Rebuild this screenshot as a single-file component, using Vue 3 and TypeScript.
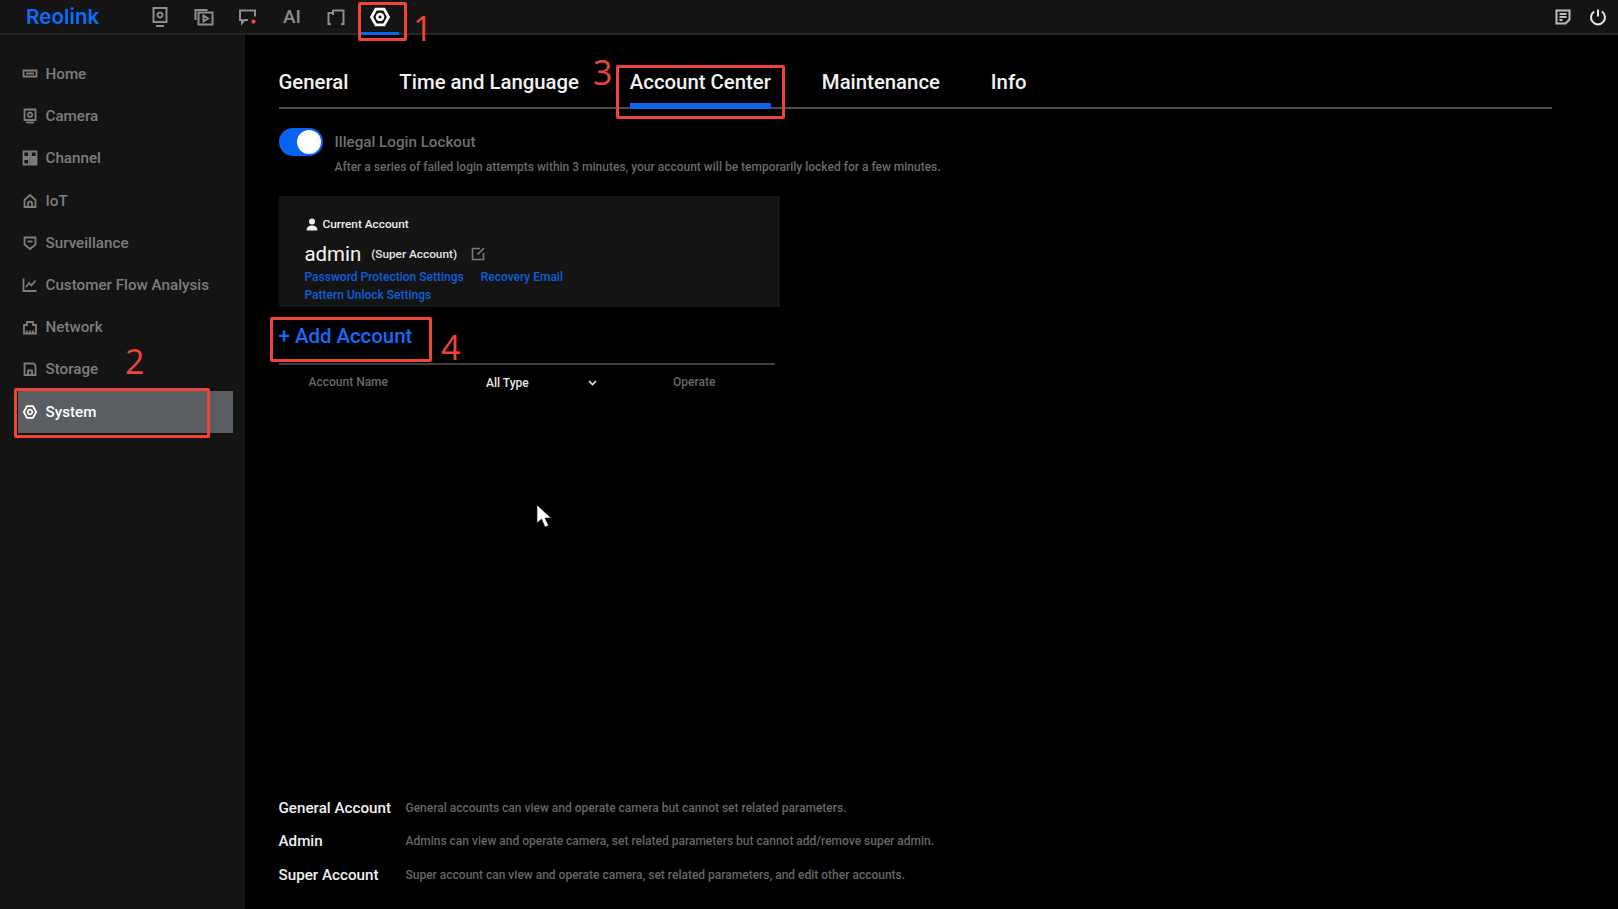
<script setup lang="ts">
interface NavItem {
  label: string
  paths: string[]
  active?: boolean
}

const hexPath = 'M5 2.2h6L14.2 8 11 13.8H5L1.8 8z'

const navItems: NavItem[] = [
  { label: 'Home', paths: ['M1.5 4.5h13v6h-13z', 'M4 7.5h8'] },
  { label: 'Camera', paths: ['M2.5 1.5h11v10.5h-11z', 'M8 4.5a2.2 2.2 0 1 0 .01 0z', 'M4 14.5h8'] },
  { label: 'Channel', paths: ['M1.5 1.5h5.5v5.5h-5.5z', 'M9 1.5h5.5v5.5h-5.5z', 'M1.5 9h5.5v5.5h-5.5z', 'M9 9h5.5v5.5h-5.5zM10.5 10.5h2.5v2.5h-2.5z'] },
  { label: 'IoT', paths: ['M2.5 7l5.5-5 5.5 5v7h-11z', 'M6 14v-3.5a2 2 0 0 1 4 0v3.5'] },
  { label: 'Surveillance', paths: ['M2.5 2.5h11v7l-5.5 4.5-5.5-4.5z', 'M5.5 6.5h5'] },
  { label: 'Customer Flow Analysis', paths: ['M1.5 1.5v12.5h13', 'M4 10l3-4 2.5 2.5 4-5'] },
  { label: 'Network', paths: ['M2 6h3v-3h6v3h3v8.5h-12z', 'M5 14.5v-3M8 14.5v-3M11 14.5v-3'] },
  { label: 'Storage', paths: ['M2.5 2.5h9l2 2v9.5h-11z', 'M6 14v-4.5h4v4.5'] },
  { label: 'System', paths: [hexPath, 'M8 5.7a2.3 2.3 0 1 0 .01 0z'], active: true }
]

const tabs = ['General', 'Time and Language', 'Account Center', 'Maintenance', 'Info']

const legend = [
  { name: 'General Account', text: 'General accounts can view and operate camera but cannot set related parameters.' },
  { name: 'Admin', text: 'Admins can view and operate camera, set related parameters but cannot add/remove super admin.' },
  { name: 'Super Account', text: 'Super account can view and operate camera, set related parameters, and edit other accounts.' }
]
</script>

<template>
  <div class="app">
    <header class="topbar">
      <div class="logo">Reolink</div>
      <nav class="top-icons">
        <div class="top-icon">
          <svg width="20" height="22" viewBox="0 0 20 22"><path d="M3.5 2h13v14h-13zM6 20h8M10 6.5a2.5 2.5 0 1 0 .01 0z" /></svg>
        </div>
        <div class="top-icon">
          <svg width="20" height="20" viewBox="0 0 20 20"><path d="M1.5 13V3h12M4.5 5.5h14v12h-14zM9.5 8.5l4.5 3-4.5 3z" /></svg>
        </div>
        <div class="top-icon">
          <svg width="20" height="20" viewBox="0 0 20 20"><path d="M10 13H6.5l-2.5 3v-3H2V3.5h15v6" /><circle class="alert-dot" cx="15.5" cy="14.5" r="2.6" /></svg>
        </div>
        <div class="top-icon ai">AI</div>
        <div class="top-icon">
          <svg width="20" height="20" viewBox="0 0 20 20"><path d="M5 17H2.5V6H7V3.5h10.5V17H15M7 6v2M9 17h.01M12 17h.01" /></svg>
        </div>
        <div class="top-icon selected">
          <svg width="22" height="22" viewBox="0 0 16 16"><path d="M5 2.2h6L14.2 8 11 13.8H5L1.8 8zM8 5.9a2.1 2.1 0 1 0 .01 0z" /></svg>
        </div>
      </nav>
      <div class="top-right">
        <svg class="note-icon" width="18" height="18" viewBox="0 0 18 18"><path d="M2.5 2.5h13v9l-4 4h-9zM5.5 6h7M5.5 9h7M5.5 12h3" /></svg>
        <svg class="power-icon" width="18" height="18" viewBox="0 0 18 18"><path d="M5.2 3.5a7 7 0 1 0 7.6 0M9 1.5v7" /></svg>
      </div>
    </header>

    <div class="body">
      <aside class="sidebar">
        <div
          v-for="item in navItems"
          :key="item.label"
          class="nav-item"
          :class="{ active: item.active }"
        >
          <svg width="16" height="16" viewBox="0 0 16 16">
            <path v-for="p in item.paths" :key="p" :d="p" />
          </svg>
          <span>{{ item.label }}</span>
        </div>
      </aside>

      <main class="content">
        <div class="tabs">
          <div
            v-for="tab in tabs"
            :key="tab"
            class="tab"
            :class="{ active: tab === 'Account Center' }"
          >{{ tab }}</div>
        </div>

        <div class="lockout">
          <div class="toggle"><span class="knob"></span></div>
          <div>
            <div class="lockout-title">Illegal Login Lockout</div>
            <div class="lockout-desc">After a series of failed login attempts within 3 minutes, your account will be temporarily locked for a few minutes.</div>
          </div>
        </div>

        <section class="account-card">
          <div class="current">
            <svg width="12" height="13" viewBox="0 0 12 13"><circle cx="6" cy="3.4" r="3" /><path d="M.6 12.5c0-3.6 2.2-5 5.4-5s5.4 1.4 5.4 5z" /></svg>
            Current Account
          </div>
          <div class="name-row">
            <span class="name">admin</span>
            <span class="role">(Super Account)</span>
            <svg width="15" height="15" viewBox="0 0 15 15"><path d="M9 2.5H1.5v11h11V7M6.5 8.5l6.5-6.5" /></svg>
          </div>
          <div class="links">
            <a>Password Protection Settings</a>
            <a>Recovery Email</a>
            <a>Pattern Unlock Settings</a>
          </div>
        </section>

        <div class="add-account">+ Add Account</div>

        <div class="table-head">
          <div class="col-name">Account Name</div>
          <div class="col-type">
            <span>All Type</span>
            <svg width="9" height="6" viewBox="0 0 9 6"><path d="M1 1l3.5 3.5L8 1" /></svg>
          </div>
          <div class="col-op">Operate</div>
        </div>

        <div class="legend">
          <div v-for="row in legend" :key="row.name" class="legend-row">
            <div class="legend-name">{{ row.name }}</div>
            <div class="legend-text">{{ row.text }}</div>
          </div>
        </div>
      </main>
    </div>

    <!-- Red tutorial marks drawn over the screen -->
    <div class="mark box-1"></div>
    <div class="mark box-2"></div>
    <div class="mark box-3"></div>
    <div class="mark box-4"></div>
    <div class="num num-1">1</div>
    <div class="num num-2">2</div>
    <div class="num num-3">3</div>
    <div class="num num-4">4</div>

    <svg class="cursor" width="16" height="24" viewBox="0 0 16 24"><path d="M1 1v18l4.5-4 3.5 8 3.5-1.5-3.5-7.5h6z" /></svg>
  </div>
</template>

<style scoped>
.app {
  position: relative;
  width: 1618px;
  height: 909px;
  overflow: hidden;
  display: flex;
  flex-direction: column;
  background: #000;
  color: #fff;
  font-family: Roboto, "Liberation Sans", sans-serif;
}

.topbar {
  flex: none;
  height: 33px;
  display: flex;
  align-items: center;
  background: #141414;
  border-bottom: 2px solid #262626;
}

.logo {
  width: 112px;
  padding-left: 26px;
  color: #0f6dfa;
  font-family: Inter, Roboto, sans-serif;
  font-size: 20.5px;
  font-weight: 600;
  letter-spacing: 0.1px;
}

.top-icons {
  display: flex;
  height: 100%;
}

.top-icon {
  width: 44px;
  display: flex;
  align-items: center;
  justify-content: center;
  position: relative;
}

.top-icon svg,
.top-right svg {
  fill: none;
  stroke: #8c8c8c;
  stroke-width: 2;
}

.top-icon .alert-dot {
  fill: #f0433a;
  stroke: #141414;
  stroke-width: 1;
}

.top-icon.ai {
  color: #8c8c8c;
  font-size: 19px;
  font-weight: 500;
}

.top-icon.selected svg {
  stroke: #fff;
}

.top-icon.selected::after {
  content: "";
  position: absolute;
  left: 3px;
  right: 3px;
  bottom: -2px;
  height: 3px;
  background: #0f63e8;
}

.top-right {
  margin-left: auto;
  display: flex;
  align-items: center;
  gap: 17px;
  padding-right: 11px;
}

.top-right .note-icon {
  stroke: #bdbdbd;
}

.top-right .power-icon {
  stroke: #e6e6e6;
}

.body {
  flex: 1;
  display: flex;
  min-height: 0;
}

.sidebar {
  flex: none;
  width: 245px;
  padding: 18px 12px 0 18px;
  box-sizing: border-box;
  background: #141414;
}

.nav-item {
  height: 42.2px;
  display: flex;
  align-items: center;
  gap: 7.5px;
  padding-left: 4px;
  color: #7d7d7d;
  font-size: 15.2px;
  font-weight: 500;
}

.nav-item svg {
  fill: none;
  stroke: #7d7d7d;
  stroke-width: 1.8;
}

.nav-item.active {
  background: #5a5d61;
  color: #fff;
}

.nav-item.active svg {
  stroke: #fff;
}

.content {
  flex: 1;
  min-width: 0;
  display: flex;
  flex-direction: column;
  padding: 0 66px 0 33.5px;
}

.tabs {
  display: flex;
  gap: 50.9px;
  height: 74px;
  box-sizing: border-box;
  border-bottom: 2px solid #4d4d4d;
}

.tab {
  padding-top: 32px;
  font-size: 20.35px;
  font-weight: 500;
  line-height: 30px;
  color: #f2f2f2;
  margin-bottom: -2px;
}

.tab.active {
  box-sizing: border-box;
  height: 74px;
  border-bottom: 6px solid #0f63e8;
}

.lockout {
  display: flex;
  gap: 12px;
  margin-top: 19px;
}

.toggle {
  width: 44px;
  height: 28px;
  border-radius: 14px;
  background: #0a63f0;
  position: relative;
}

.knob {
  position: absolute;
  right: 2px;
  top: 2px;
  width: 24px;
  height: 24px;
  border-radius: 50%;
  background: #fff;
}

.lockout-title {
  color: #707070;
  font-size: 15.2px;
  font-weight: 500;
  line-height: 29px;
}

.lockout-desc {
  color: #6a6a6a;
  font-size: 12px;
  font-weight: 500;
  line-height: 20px;
}

.account-card {
  width: 501.5px;
  height: 111px;
  box-sizing: border-box;
  margin-top: 19px;
  padding: 20px 26px 0;
  background: #141414;
}

.current {
  display: flex;
  align-items: center;
  gap: 5px;
  padding-left: 1px;
  font-size: 11.8px;
  font-weight: 500;
  line-height: 16px;
  color: #eee;
}

.current svg {
  fill: #eee;
}

.name-row {
  display: flex;
  align-items: center;
  height: 29px;
  margin-top: 7px;
}

.name {
  font-size: 20.4px;
  color: #f5f5f5;
}

.role {
  margin-left: 10px;
  font-size: 11.8px;
  font-weight: 500;
  color: #e6e6e6;
}

.name-row svg {
  margin-left: 14px;
  fill: none;
  stroke: #777;
  stroke-width: 1.6;
}

.links {
  display: flex;
  flex-wrap: wrap;
  column-gap: 17px;
  width: 300px;
  line-height: 18px;
  color: #0f5fdc;
  font-size: 12px;
  font-weight: 500;
}

.add-account {
  margin-top: 13px;
  color: #0f6dfa;
  font-size: 20.4px;
  font-weight: 500;
  line-height: 32px;
  padding-bottom: 11px;
  width: 496px;
  border-bottom: 2px solid #3f3f3f;
}

.table-head {
  display: flex;
  align-items: center;
  width: 496px;
  height: 34px;
  padding-left: 30px;
  box-sizing: border-box;
  font-size: 12px;
  font-weight: 500;
  color: #686868;
}

.col-name {
  width: 177.5px;
}

.col-type {
  width: 187px;
  display: flex;
  align-items: center;
  padding-top: 2px;
  color: #e6e6e6;
}

.col-type span {
  width: 102px;
}

.col-type svg {
  fill: none;
  stroke: #e6e6e6;
  stroke-width: 1.6;
}

.legend {
  margin-top: auto;
  padding-bottom: 17px;
}

.legend-row {
  display: flex;
  align-items: center;
  height: 33.7px;
}

.legend-name {
  width: 127px;
  font-size: 15.2px;
  font-weight: 500;
  color: #f0f0f0;
}

.legend-text {
  font-size: 12px;
  font-weight: 500;
  color: #666;
}

.mark {
  position: absolute;
  border: 3px solid #f0433a;
  border-radius: 2px;
  box-sizing: border-box;
}

.box-1 { left: 358px; top: 2px; width: 49px; height: 39px; }
.box-2 { left: 14px; top: 388px; width: 196px; height: 50px; }
.box-3 { left: 616px; top: 65px; width: 169px; height: 54px; }
.box-4 { left: 270px; top: 317px; width: 162px; height: 45px; }

.num {
  position: absolute;
  color: #f0433a;
  font-family: "Open Sans", sans-serif;
  font-size: 34px;
  line-height: 40px;
}

.num-1 { left: 413px; top: 8px; }
.num-2 { left: 125px; top: 341px; }
.num-3 { left: 593px; top: 52px; }
.num-4 { left: 441px; top: 327px; }

.cursor {
  position: absolute;
  left: 536px;
  top: 504px;
  fill: #fff;
  stroke: #222;
  stroke-width: 0.6;
}
</style>
